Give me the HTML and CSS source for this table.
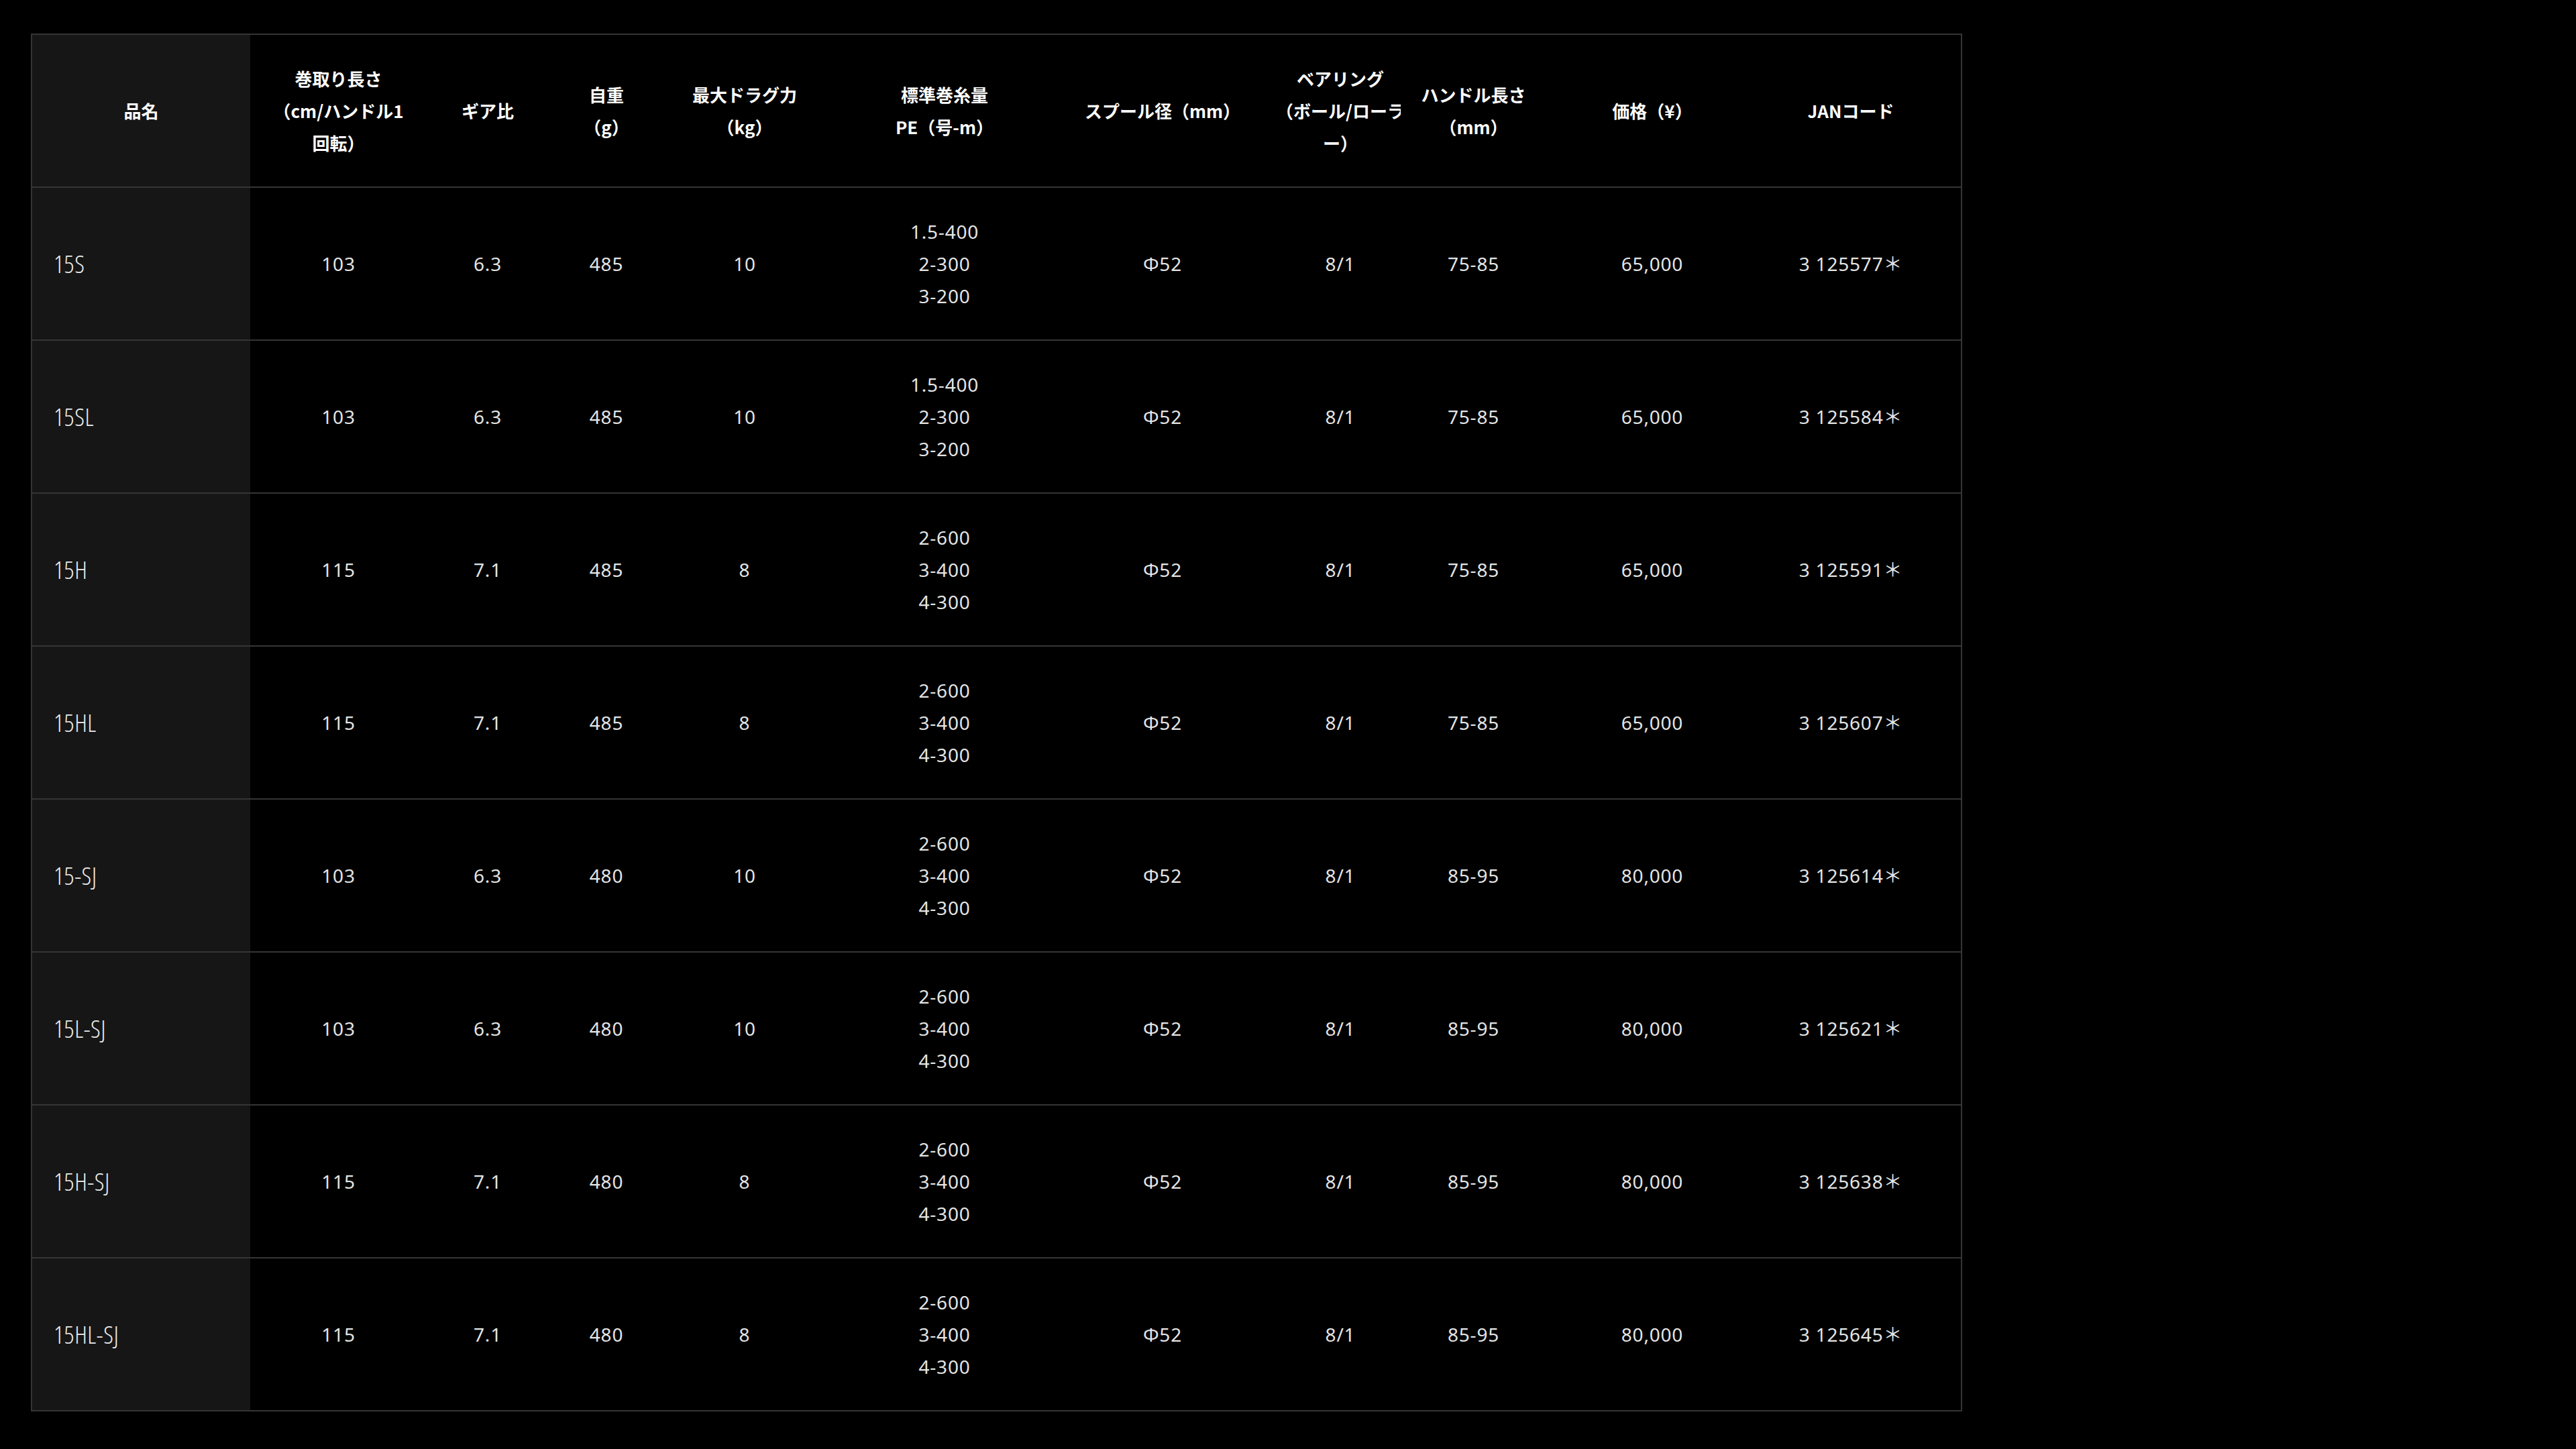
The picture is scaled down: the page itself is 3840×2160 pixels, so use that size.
FILE: index.html
```html
<!DOCTYPE html>
<html lang="ja">
<head>
<meta charset="utf-8">
<title>スペック表</title>
<link rel="stylesheet" href="styles.css">
</head>
<body>
<div class="spec">
  <div class="row head">
    <div class="cell name">品名</div>
    <div class="cell">巻取り長さ<br>（cm/ハンドル1<br>回転）</div>
    <div class="cell">ギア比</div>
    <div class="cell">自重<br>（g）</div>
    <div class="cell">最大ドラグ力<br>（kg）</div>
    <div class="cell">標準巻糸量<br>PE（号-m）</div>
    <div class="cell c7">スプール径（mm）</div>
    <div class="cell c8">ベアリング<br>（ボール/ローラ<br>ー）</div>
    <div class="cell c9">ハンドル長さ<br>（mm）</div>
    <div class="cell">価格（¥）</div>
    <div class="cell">JANコード</div>
  </div>

  <div class="row">
    <div class="cell name">15S</div>
    <div class="cell">103</div><div class="cell">6.3</div><div class="cell">485</div><div class="cell">10</div>
    <div class="cell">1.5-400<br>2-300<br>3-200</div>
    <div class="cell c7">Φ52</div><div class="cell c8">8/1</div><div class="cell c9">75-85</div>
    <div class="cell">65,000</div><div class="cell">3 125577＊</div>
  </div>
  <div class="row">
    <div class="cell name">15SL</div>
    <div class="cell">103</div><div class="cell">6.3</div><div class="cell">485</div><div class="cell">10</div>
    <div class="cell">1.5-400<br>2-300<br>3-200</div>
    <div class="cell c7">Φ52</div><div class="cell c8">8/1</div><div class="cell c9">75-85</div>
    <div class="cell">65,000</div><div class="cell">3 125584＊</div>
  </div>
  <div class="row">
    <div class="cell name">15H</div>
    <div class="cell">115</div><div class="cell">7.1</div><div class="cell">485</div><div class="cell">8</div>
    <div class="cell">2-600<br>3-400<br>4-300</div>
    <div class="cell c7">Φ52</div><div class="cell c8">8/1</div><div class="cell c9">75-85</div>
    <div class="cell">65,000</div><div class="cell">3 125591＊</div>
  </div>
  <div class="row">
    <div class="cell name">15HL</div>
    <div class="cell">115</div><div class="cell">7.1</div><div class="cell">485</div><div class="cell">8</div>
    <div class="cell">2-600<br>3-400<br>4-300</div>
    <div class="cell c7">Φ52</div><div class="cell c8">8/1</div><div class="cell c9">75-85</div>
    <div class="cell">65,000</div><div class="cell">3 125607＊</div>
  </div>
  <div class="row">
    <div class="cell name">15-SJ</div>
    <div class="cell">103</div><div class="cell">6.3</div><div class="cell">480</div><div class="cell">10</div>
    <div class="cell">2-600<br>3-400<br>4-300</div>
    <div class="cell c7">Φ52</div><div class="cell c8">8/1</div><div class="cell c9">85-95</div>
    <div class="cell">80,000</div><div class="cell">3 125614＊</div>
  </div>
  <div class="row">
    <div class="cell name">15L-SJ</div>
    <div class="cell">103</div><div class="cell">6.3</div><div class="cell">480</div><div class="cell">10</div>
    <div class="cell">2-600<br>3-400<br>4-300</div>
    <div class="cell c7">Φ52</div><div class="cell c8">8/1</div><div class="cell c9">85-95</div>
    <div class="cell">80,000</div><div class="cell">3 125621＊</div>
  </div>
  <div class="row">
    <div class="cell name">15H-SJ</div>
    <div class="cell">115</div><div class="cell">7.1</div><div class="cell">480</div><div class="cell">8</div>
    <div class="cell">2-600<br>3-400<br>4-300</div>
    <div class="cell c7">Φ52</div><div class="cell c8">8/1</div><div class="cell c9">85-95</div>
    <div class="cell">80,000</div><div class="cell">3 125638＊</div>
  </div>
  <div class="row">
    <div class="cell name">15HL-SJ</div>
    <div class="cell">115</div><div class="cell">7.1</div><div class="cell">480</div><div class="cell">8</div>
    <div class="cell">2-600<br>3-400<br>4-300</div>
    <div class="cell c7">Φ52</div><div class="cell c8">8/1</div><div class="cell c9">85-95</div>
    <div class="cell">80,000</div><div class="cell">3 125645＊</div>
  </div>
</div>
</body>
</html>
```

FILE: styles.css
```css
html, body {
  margin: 0;
  padding: 0;
  background: #000;
}

body {
  padding: 50px 0 0 46px;
  font-family: "Noto Sans", "Noto Sans CJK JP", sans-serif;
  color: #e4e4e4;
}

.spec {
  width: 2875px;
  border: 2px solid #353535;
  border-bottom: none;
}

.row {
  display: grid;
  grid-template-columns: 325px 263px 182px 172px 240px 356px 322px 180px 243px 264px 328px;
  height: 226px;
  border-bottom: 2px solid #353535;
}

.cell {
  display: flex;
  align-items: center;
  justify-content: center;
  text-align: center;
  font-size: 28px;
  font-weight: 400;
  line-height: 48px;
  letter-spacing: 0.8px;
  overflow: hidden;
  white-space: nowrap;
}

.head .cell {
  font-family: "Noto Sans CJK JP", "Noto Sans", sans-serif;
  font-weight: 700;
  font-size: 26px;
  line-height: 48px;
  letter-spacing: 0;
  color: #fff;
}

.cell.name {
  background: #161616;
  justify-content: flex-start;
  padding-left: 32px;
  font-family: "Open Sans", "DejaVu Sans", sans-serif;
  font-stretch: 75%;
  font-weight: 300;
  font-size: 37px;
  letter-spacing: 0.5px;
  color: #ececec;
}

.head .cell.name {
  justify-content: center;
  padding-left: 0;
  font-family: "Noto Sans CJK JP", sans-serif;
  font-stretch: normal;
  font-weight: 700;
  font-size: 26px;
  letter-spacing: 0;
  color: #fff;
}

.c7 {
  padding-right: 28px;
}

.c9 {
  padding-right: 26px;
}
```
